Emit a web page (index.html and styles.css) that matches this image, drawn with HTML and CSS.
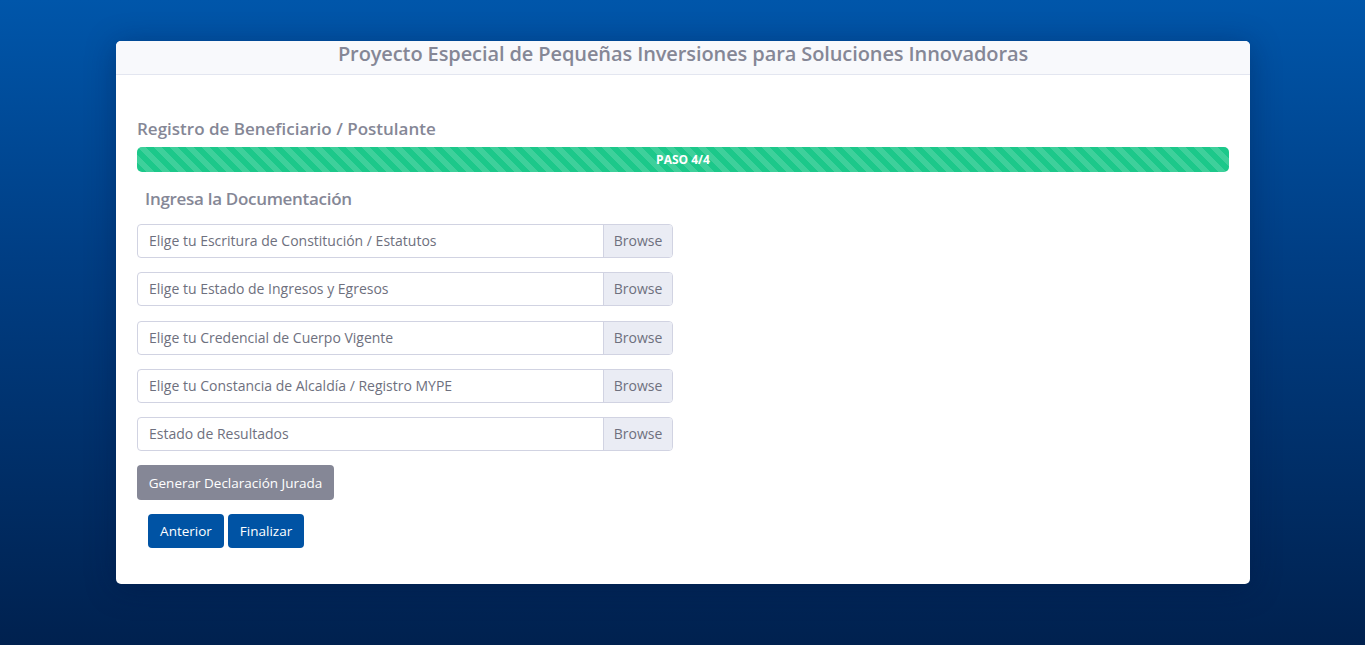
FILE: index.html
```html
<!DOCTYPE html>
<html lang="es">
<head>
<meta charset="utf-8">
<title>Registro</title>
<link rel="stylesheet" href="styles.css">
</head>
<body>
<div class="page">
  <div class="card">
    <div class="card-header">Proyecto Especial de Pequeñas Inversiones para Soluciones Innovadoras</div>
    <div class="card-body">
      <h2 class="title">Registro de Beneficiario / Postulante</h2>
      <div class="progress"><div class="progress-bar">PASO 4/4</div></div>
      <h3 class="subtitle">Ingresa la Documentación</h3>
      <div class="files">
        <div class="file"><span class="file-label">Elige tu Escritura de Constitución / Estatutos</span><span class="file-btn">Browse</span></div>
        <div class="file"><span class="file-label">Elige tu Estado de Ingresos y Egresos</span><span class="file-btn">Browse</span></div>
        <div class="file"><span class="file-label">Elige tu Credencial de Cuerpo Vigente</span><span class="file-btn">Browse</span></div>
        <div class="file"><span class="file-label">Elige tu Constancia de Alcaldía / Registro MYPE</span><span class="file-btn">Browse</span></div>
        <div class="file"><span class="file-label">Estado de Resultados</span><span class="file-btn">Browse</span></div>
      </div>
      <button class="btn btn-gray">Generar Declaración Jurada</button>
      <div class="nav">
        <button class="btn btn-blue">Anterior</button>
        <button class="btn btn-blue">Finalizar</button>
      </div>
    </div>
  </div>
</div>
</body>
</html>
```

FILE: styles.css
```css
* { box-sizing: border-box; }
html, body { margin: 0; height: 100%; }
body {
  font-family: "Open Sans", "DejaVu Sans", sans-serif;
  background: linear-gradient(180deg, #0056aa 0%, #003e84 40%, #00214f 100%);
  min-height: 645px;
}
.page {
  padding: 41px 115px 0 116px;
}
.card {
  background: #fff;
  border-radius: 5px;
  box-shadow: 0 4px 30px rgba(0, 20, 60, 0.35);
  overflow: hidden;
}
.card-header {
  height: 34px;
  background: #f8f9fc;
  border-bottom: 1px solid #e3e6f0;
  text-align: center;
  color: #858796;
  font-size: 20px;
  line-height: 26px;
  font-weight: 600;
  letter-spacing: -0.1px;
}
.card-body {
  padding: 42px 21px 36px 21px;
}
.title {
  margin: 0 0 6px 0;
  font-size: 17px;
  line-height: 24px;
  font-weight: 600;
  color: #858796;
}
.progress {
  height: 25px;
  border-radius: 5px;
  overflow: hidden;
  background: #1cc88a;
}
.progress-bar {
  height: 100%;
  background-color: #1cc88a;
  background-image: linear-gradient(45deg, rgba(255,255,255,.15) 25%, transparent 25%, transparent 50%, rgba(255,255,255,.15) 50%, rgba(255,255,255,.15) 75%, transparent 75%, transparent);
  background-size: 16px 16px;
  color: #fff;
  font-size: 12px;
  font-weight: 700;
  text-align: center;
  line-height: 25px;
}
.subtitle {
  margin: 15px 0 13px 8px;
  font-size: 17px;
  line-height: 24px;
  font-weight: 600;
  letter-spacing: -0.3px;
  color: #858796;
}
.files {
  display: flex;
  flex-direction: column;
  gap: 14.25px;
  width: 536px;
  margin-bottom: 14px;
}
.file {
  display: flex;
  height: 34px;
  border: 1px solid #d1d3e2;
  border-radius: 4px;
  overflow: hidden;
  font-size: 14px;
  color: #6e707e;
}
.file-label {
  flex: 1;
  padding: 0 11px;
  line-height: 32px;
  white-space: nowrap;
}
.file-btn {
  width: 69px;
  background: #eaecf4;
  border-left: 1px solid #d1d3e2;
  text-align: center;
  line-height: 32px;
}
.btn {
  border: none;
  border-radius: 4px;
  color: #fff;
  font-family: inherit;
  font-size: 13.5px;
  cursor: pointer;
  white-space: nowrap;
}
.btn-gray {
  background: #858796;
  height: 35px;
  padding: 0;
  width: 197px;
  text-align: center;
}
.nav {
  display: flex;
  gap: 4px;
  margin: 14px 0 0 11px;
}
.btn-blue {
  background: #0053a4;
  height: 34px;
  width: 76px;
  padding: 0;
}
```
